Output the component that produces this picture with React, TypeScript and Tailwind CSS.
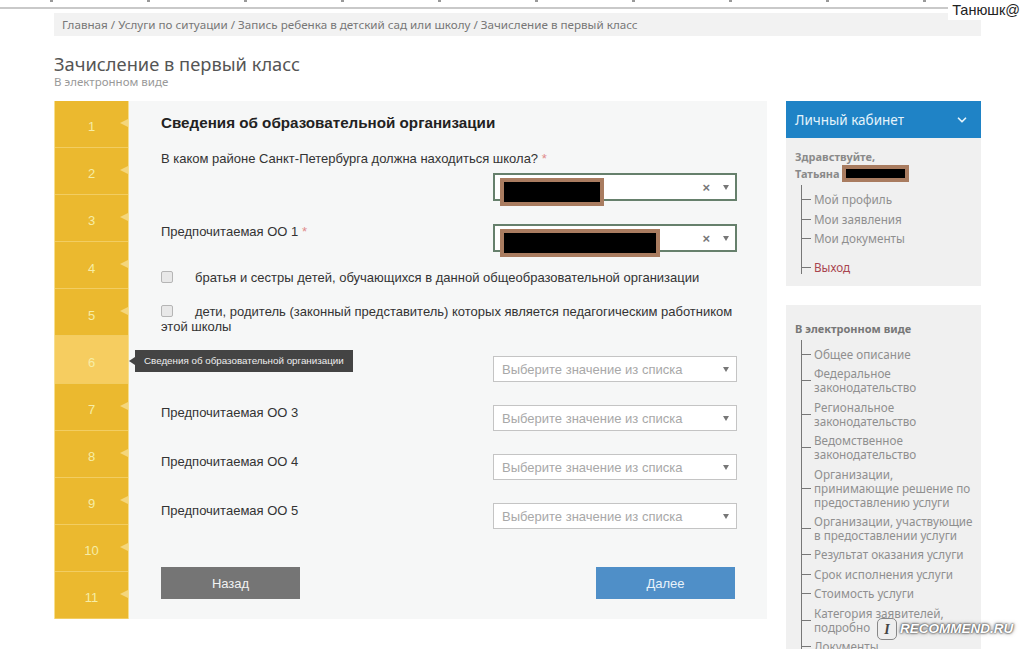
import { ChevronDown } from 'lucide-react';

const steps = ['1', '2', '3', '4', '5', '6', '7', '8', '9', '10', '11'];

const cabinetLinks = ['Мой профиль', 'Мои заявления', 'Мои документы'];

const infoLinks = [
  ['Общее описание'],
  ['Федеральное', 'законодательство'],
  ['Региональное', 'законодательство'],
  ['Ведомственное', 'законодательство'],
  ['Организации,', 'принимающие решение по', 'предоставлению услуги'],
  ['Организации, участвующие', 'в предоставлении услуги'],
  ['Результат оказания услуги'],
  ['Срок исполнения услуги'],
  ['Стоимость услуги'],
  ['Категория заявителей,', 'подробно'],
  ['Документы'],
];

const emptyRows = [
  { label: 'Предпочитаемая ОО 2', mt: 'mt-0' },
  { label: 'Предпочитаемая ОО 3', mt: 'mt-[23px]' },
  { label: 'Предпочитаемая ОО 4', mt: 'mt-[23px]' },
  { label: 'Предпочитаемая ОО 5', mt: 'mt-[23px]' },
];

function Caret() {
  return <span className="h-0 w-0 border-x-[3px] border-t-[5px] border-x-transparent border-t-[#777]" />;
}

function FilledSelect({ redactWidth }: { redactWidth: string }) {
  return (
    <div className="relative flex h-[28px] w-[244px] items-center justify-end gap-[13px] border-2 border-[#66806c] bg-white pr-[6px]">
      <span className="font-['Liberation_Sans',sans-serif] text-[13px] font-bold leading-none text-[#777]">×</span>
      <Caret />
      <div className={`absolute left-[5px] top-[3px] h-[28px] border-[4px] border-[#a97c60] bg-black ${redactWidth}`} />
    </div>
  );
}

function EmptySelect() {
  return (
    <div className="flex h-[26px] w-[244px] items-center justify-between border border-[#c4c4c4] bg-white pl-[8px] pr-[7px] text-[13px] text-[#a8a8a8]">
      <span>Выберите значение из списка</span>
      <Caret />
    </div>
  );
}

function TreeItem({ lines, color = 'text-[#8f8f8f]' }: { lines: string[]; color?: string }) {
  return (
    <li className={`relative pl-[12px] leading-[14px] ${color}`}>
      <span className="absolute left-0 top-1/2 h-px w-[9px] bg-[#777]" />
      {lines.map((line) => (
        <div key={line} className="whitespace-nowrap">{line}</div>
      ))}
    </li>
  );
}

export default function App() {
  return (
    <div className="relative h-[649px] w-[1024px] overflow-hidden bg-white font-['Liberation_Sans',sans-serif]">
      <div className="h-[9px] border-b-2 border-[#c9c9c9] bg-white">
        <div className="ml-[50px] h-[2px] w-[940px] bg-[repeating-linear-gradient(90deg,#999_0_3px,transparent_3px_97px)]" />
      </div>
      <div className="absolute right-0 top-0 bg-white px-[4px] py-px text-[14.5px] leading-[18px] text-[#222]">Танюшк@</div>

      <div className="ml-[54px] w-[927px] pt-[4px]">
        <div className="flex h-[23px] items-center bg-[#f2f2f2] pl-[8px] font-['Noto_Sans',sans-serif] text-[11.65px] text-[#777]">
          Главная / Услуги по ситуации / Запись ребенка в детский сад или школу / Зачисление в первый класс
        </div>

        <h1 className="mt-[15px] font-['Noto_Sans',sans-serif] text-[18.3px] leading-[26px] text-[#555]">Зачисление в первый класс</h1>
        <p className="-mt-[2px] font-['Noto_Sans',sans-serif] text-[11.5px] leading-[13px] text-[#999]">В электронном виде</p>

        <div className="mt-[13px] flex items-start gap-[19px]">
          <div className="relative flex h-[518px] w-[713px] bg-[#f6f7f7]">
            <ol className="w-[75px] shrink-0 border-x border-[#f7df8f] bg-[#ebb92f]">
              {steps.map((step) => (
                <li
                  key={step}
                  className={`relative flex h-[47.1px] items-center justify-center border-b border-[#f2cd62] pt-[6px] text-[13px] text-[#f6eda6] ${step === '6' ? 'bg-[#f6cd60]' : ''}`}
                >
                  {step}
                  {step !== '6' && (
                    <span className="absolute right-0 top-[18px] h-0 w-0 border-y-[4px] border-r-[8px] border-y-transparent border-r-[#f4d67c]" />
                  )}
                </li>
              ))}
            </ol>

            <div className="flex-1 pl-[32px] pr-[30px] text-[13px] leading-[15px] text-[#333]">
              <h2 className="mt-[13px] text-[15.2px] font-bold leading-[18px] text-[#222]">Сведения об образовательной организации</h2>
              <p className="mt-[19px]">
                В каком районе Санкт-Петербурга должна находиться школа? <span className="text-[#e08a8a]">*</span>
              </p>
              <div className="ml-[332px] mt-[7px]">
                <FilledSelect redactWidth="w-[104px]" />
              </div>
              <div className="mt-[23px] flex justify-between">
                <span>
                  Предпочитаемая ОО 1 <span className="text-[#e08a8a]">*</span>
                </span>
                <FilledSelect redactWidth="w-[160px]" />
              </div>
              <div className="mt-[18px] flex items-start">
                <span className="mt-px h-[12px] w-[12px] shrink-0 rounded-[2px] border border-[#b5b5b5] bg-[#e8e8e8]" />
                <span className="ml-[22px]">братья и сестры детей, обучающихся в данной общеобразовательной организации</span>
              </div>
              <p className="mt-[19px]">
                <span className="mr-[22px] inline-block h-[12px] w-[12px] rounded-[2px] border border-[#b5b5b5] bg-[#e8e8e8] align-[-1px]" />
                дети, родитель (законный представитель) которых является педагогическим работником этой школы
              </p>

              <div className="mt-[22px]">
                {emptyRows.map((row) => (
                  <div key={row.label} className={`flex justify-between ${row.mt}`}>
                    <span>{row.label}</span>
                    <EmptySelect />
                  </div>
                ))}
              </div>

              <div className="mt-[38px] flex justify-between pr-[2px] text-[13px]">
                <button className="h-[32px] w-[139px] bg-[#757575] text-[#f2f2f2]">Назад</button>
                <button className="h-[32px] w-[139px] bg-[#4f8fc8] text-[#e8f2fa]">Далее</button>
              </div>
            </div>

            <div className="absolute left-[81px] top-[249px] flex h-[22px] w-[218px] items-center bg-[#444] pl-[9px] text-[9.8px] text-[#eee]">
              <span className="absolute -left-[6px] top-[7px] h-0 w-0 border-y-[4px] border-r-[6px] border-y-transparent border-r-[#444]" />
              Сведения об образовательной организации
            </div>
          </div>

          <aside className="w-[195px] font-['Noto_Sans',sans-serif] text-[11.7px]">
            <div className="flex h-[37px] items-center justify-between bg-[#1f83c6] pl-[9px] pr-[12px] pt-px text-[13.5px] text-[#e4f3fb]">
              Личный кабинет
              <ChevronDown size={14} strokeWidth={3} />
            </div>
            <div className="h-[148px] bg-[#f0f0f0] pl-[9px] pt-[10px]">
              <div className="text-[11px] font-bold leading-[17px] text-[#8a8a8a]">
                <div>Здравствуйте,</div>
                <div className="flex items-center gap-[2px]">
                  Татьяна
                  <span className="h-[17px] w-[67px] border-[4px] border-[#a97c60] bg-black" />
                </div>
              </div>
              <ul className="ml-[6px] mt-[3px] flex flex-col gap-[5.5px] border-l border-[#777] pt-[7px]">
                {cabinetLinks.map((link) => (
                  <TreeItem key={link} lines={[link]} />
                ))}
                <li className="mt-[9px]">
                  <TreeItem lines={['Выход']} color="text-[#a8454f]" />
                </li>
              </ul>
            </div>

            <div className="mt-[19px] h-[400px] bg-[#f0f0f0] pl-[9px] pt-[16px]">
              <div className="text-[11px] font-bold leading-[15px] text-[#777]">В электронном виде</div>
              <ul className="ml-[6px] mt-[4px] flex flex-col gap-[5.4px] border-l border-[#777] pt-[7px]">
                {infoLinks.map((lines) => (
                  <TreeItem key={lines[0]} lines={lines} />
                ))}
              </ul>
            </div>
          </aside>
        </div>
      </div>

      <div className="absolute left-[877px] top-[617px] flex h-[24px] items-center gap-[3px]">
        <span className="flex h-[22px] w-[20px] items-center justify-center rounded-[5px] border border-[#888] bg-[#eee] font-['Liberation_Serif',serif] text-[14px] font-bold italic text-[#444]">I</span>
        <span className="text-[13.5px] font-bold italic text-white [text-shadow:0_0_2px_#555,0_0_2px_#555,0_0_4px_#777]">RECOMMEND.RU</span>
      </div>
    </div>
  );
}
